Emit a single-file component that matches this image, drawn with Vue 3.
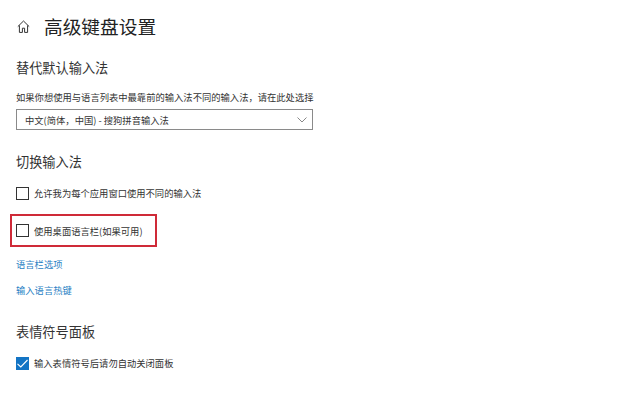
<template>
  <div class="page">
    <header class="title-row">
      <svg class="home" width="13" height="13" viewBox="0 0 13 13" fill="none" stroke="#333" stroke-width="1">
        <path d="M.8 6.600 6.500 1l5.700 5.600" />
        <path d="M2.400 5.400v7h3V8.200h2.200v4.200h3v-7" />
      </svg>
      <h1>高级键盘设置</h1>
    </header>

    <h2 class="first">替代默认输入法</h2>
    <p class="hint">如果你想使用与语言列表中最靠前的输入法不同的输入法，请在此处选择</p>
    <div class="select">
      <span>中文(简体，中国) - 搜狗拼音输入法</span>
      <svg width="10" height="6" viewBox="0 0 10 6" fill="none" stroke="#888" stroke-width="1">
        <path d="M.5.5 5 5 9.500.5" />
      </svg>
    </div>

    <h2 class="switch">切换输入法</h2>
    <label class="check per-app"><i class="box"></i>允许我为每个应用窗口使用不同的输入法</label>
    <div class="marked">
      <label class="check"><i class="box"></i>使用桌面语言栏(如果可用)</label>
    </div>
    <a class="link bar-link">语言栏选项</a>
    <a class="link key-link">输入语言热键</a>

    <h2 class="emoji">表情符号面板</h2>
    <label class="check">
      <i class="box on">
        <svg width="13" height="13" viewBox="0 0 13 13" fill="none" stroke="#fff" stroke-width="1.1">
          <path d="M1.500 6.800 4.800 10 11.500 3" />
        </svg>
      </i>
      输入表情符号后请勿自动关闭面板
    </label>
  </div>
</template>

<script setup>
</script>

<style>
body {
  background: #fff;
}
</style>

<style scoped>
.page {
  width: 631px;
  height: 400px;
  box-sizing: border-box;
  padding: 14px 0 0 16px;
  overflow: hidden;
  color: #222;
  font-family: "Noto Sans CJK SC", "Noto Sans", sans-serif;
}

.title-row {
  display: flex;
  align-items: center;
  height: 24px;
}

.home {
  flex: none;
  margin: 1px 0 0 1px;
}

h1 {
  margin: 0 0 0 14px;
  font-size: 18.700px;
  font-weight: 400;
  line-height: 24px;
}

h2 {
  margin: 0;
  font-size: 13.200px;
  font-weight: 400;
  line-height: 18px;
  color: #333;
}

.first {
  margin-top: 21px;
}

.hint {
  margin: 13px 0 0;
  font-size: 9.300px;
  line-height: 14px;
  color: #333;
  white-space: nowrap;
}

.select {
  display: flex;
  align-items: center;
  justify-content: space-between;
  box-sizing: border-box;
  width: 297px;
  height: 21px;
  margin-top: 5px;
  padding: 0 5px 0 8px;
  border: 1px solid #8a8a8a;
  font-size: 9.300px;
  color: #333;
}

.switch {
  margin-top: 23px;
}

.check {
  display: flex;
  align-items: center;
  font-size: 9.300px;
  line-height: 14px;
  color: #333;
}

.per-app {
  margin-top: 15px;
}

.box {
  flex: none;
  box-sizing: border-box;
  width: 13px;
  height: 13px;
  margin-right: 5px;
  border: 1px solid #333;
}

.box.on {
  border: 0;
  background: #1374c4;
}

.box svg {
  display: block;
}

.marked {
  display: flex;
  align-items: center;
  box-sizing: border-box;
  width: 147px;
  height: 33px;
  margin: 14px 0 0 -6px;
  padding-left: 4px;
  border: 2px solid #cf2a38;
}

.link {
  display: block;
  font-size: 9.300px;
  line-height: 14px;
  color: #2a7fc4;
}

.bar-link {
  margin-top: 10px;
}

.key-link {
  margin-top: 12px;
}

.emoji {
  margin-top: 26px;
  margin-bottom: 15px;
}
</style>
